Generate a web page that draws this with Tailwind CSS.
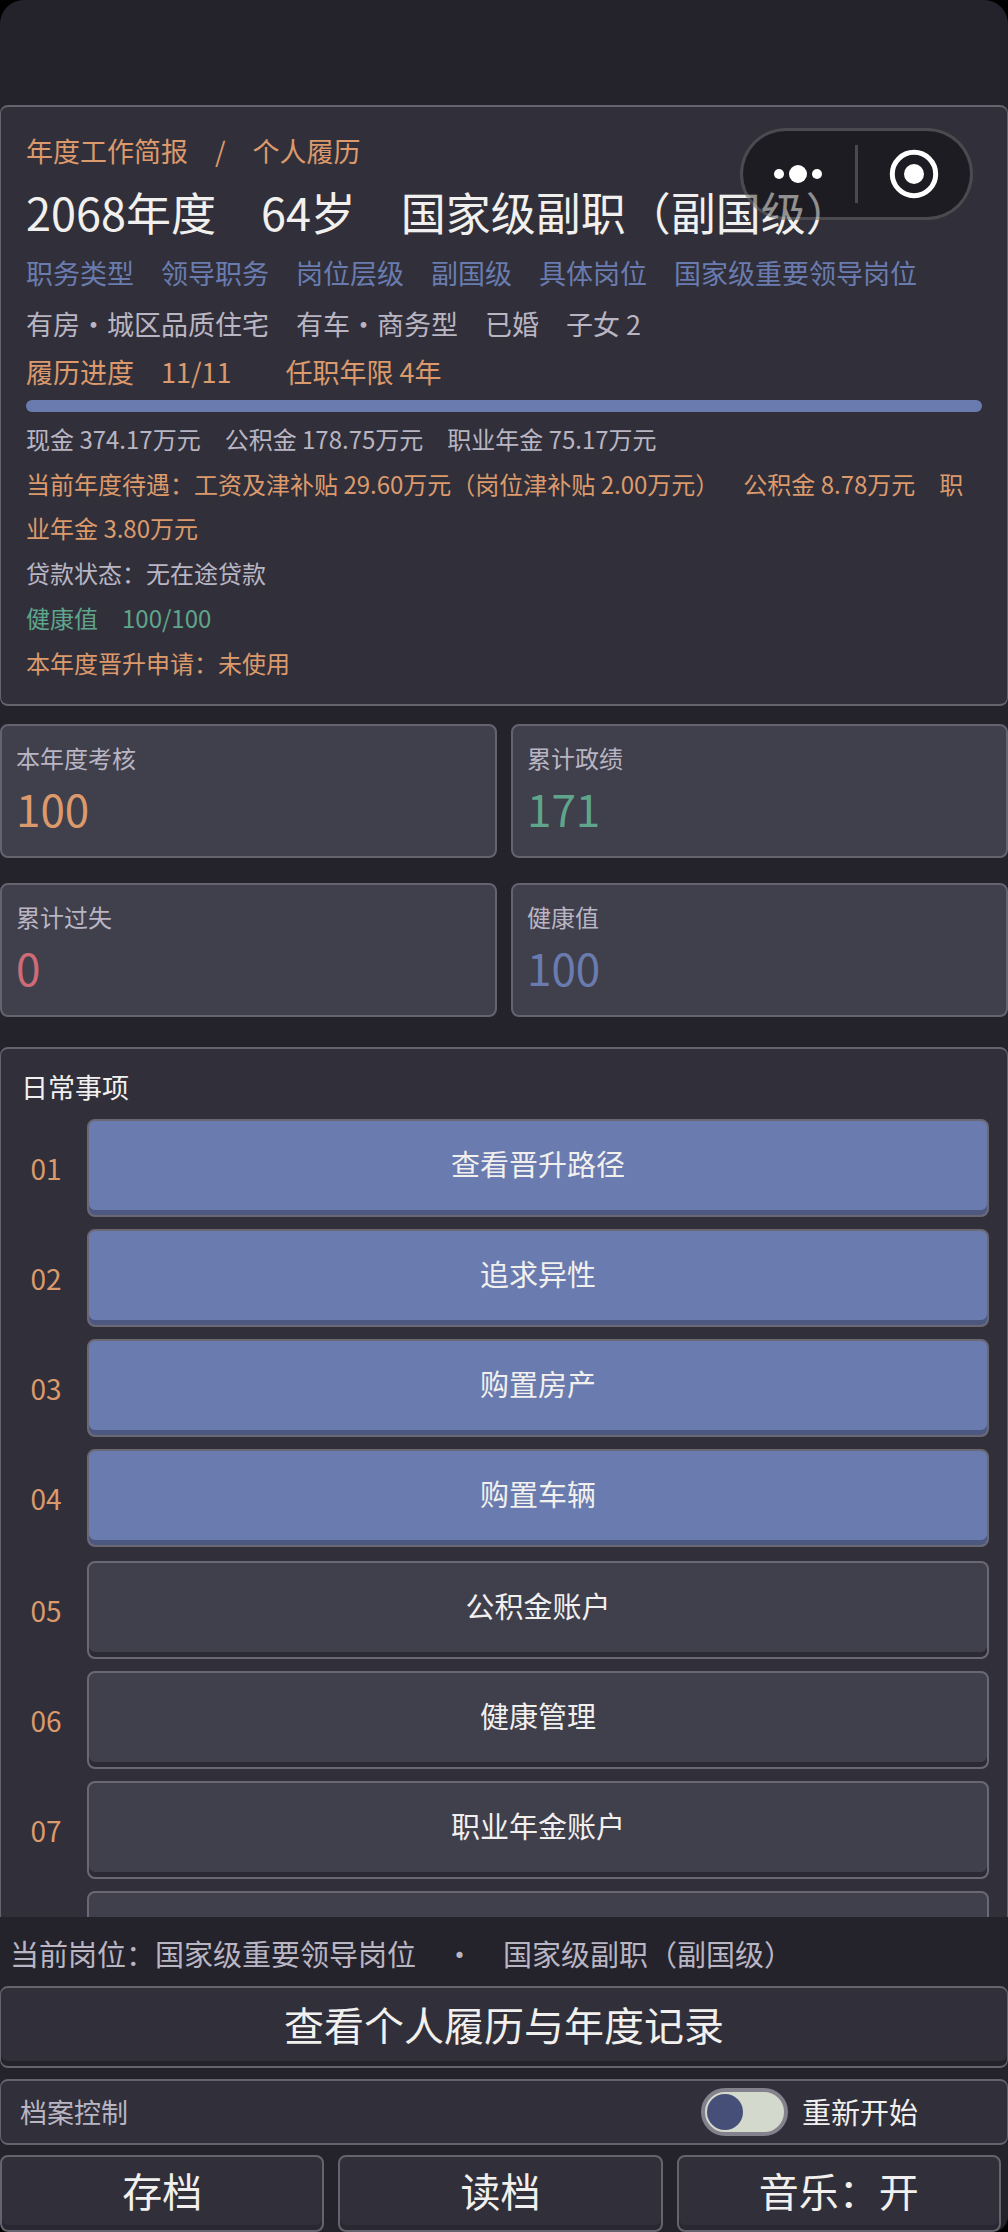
<!DOCTYPE html>
<html lang="zh-CN">
<head>
    <meta charset="UTF-8">
    <meta name="viewport" content="width=device-width, initial-scale=1.0">
    <title>年度工作简报</title>
    <script src="https://cdn.jsdelivr.net/npm/@tailwindcss/browser@4"></script>
</head>
<body class="bg-black font-['Noto_Sans_CJK_SC',sans-serif] [text-spacing-trim:space-all]">
    <div class="relative h-screen flex flex-col overflow-hidden rounded-t-3xl rounded-bl-lg rounded-br-2xl bg-[#24232c] text-[#f2f0ee]">

        <!-- mini program capsule -->
        <div class="absolute top-32 right-[35px] z-10 flex items-center w-[233px] h-[92px] rounded-full border-3 border-white/20 bg-black/40">
            <button type="button" aria-label="更多" class="flex-1 flex justify-center">
                <svg class="w-[50px] h-5" viewBox="0 0 50 20" fill="#fff">
                    <circle cx="5" cy="10" r="5"/>
                    <circle cx="24" cy="10" r="9"/>
                    <circle cx="43" cy="10" r="5"/>
                </svg>
            </button>
            <span class="w-[3px] h-[58px] bg-white/20"></span>
            <button type="button" aria-label="关闭" class="flex-1 flex justify-center">
                <svg class="size-[50px]" viewBox="0 0 50 50" fill="none">
                    <circle cx="25" cy="25" r="21.7" stroke="#fff" stroke-width="5"/>
                    <circle cx="25" cy="25" r="10" fill="#fff"/>
                </svg>
            </button>
        </div>

        <main class="flex-1 min-h-0 overflow-hidden pt-[105px]">
            <section class="rounded-lg border-x border-y-2 border-[#64636e] bg-[#31303a] px-[25px] pt-[22px] pb-[19px]">
                <p class="text-[27px] leading-[44px] text-[#dc9a6c]">年度工作简报　/　个人履历</p>
                <h1 class="text-[45px] leading-[78px]">2068年度　64岁　国家级副职（副国级）</h1>
                <p class="text-[27px] leading-[44px] text-[#6a7caf]">职务类型　领导职务　岗位层级　副国级　具体岗位　国家级重要领导岗位</p>
                <p class="mt-[5px] text-[27px] leading-[48px] text-[#b9b5c3]">有房・城区品质住宅　有车・商务型　已婚　子女 2</p>
                <p class="text-[27px] leading-[48px] text-[#dc9a6c]">履历进度　11/11　　任职年限 4年</p>
                <div class="mt-1 mb-[5px] h-3 rounded-full bg-[#6a7caf]"></div>
                <div class="flex flex-col gap-px text-[24px] leading-[44px]">
                    <p class="text-[#b9b5c3]">现金 374.17万元　公积金 178.75万元　职业年金 75.17万元</p>
                    <p class="text-[#dc9a6c]">当前年度待遇：工资及津补贴 29.60万元（岗位津补贴 2.00万元）　公积金 8.78万元　职业年金 3.80万元</p>
                    <p class="text-[#b9b5c3]">贷款状态：无在途贷款</p>
                    <p class="text-[#5fa58b]">健康值　100/100</p>
                    <p class="text-[#dc9a6c]">本年度晋升申请：未使用</p>
                </div>
            </section>

            <section class="mt-[18px] grid grid-cols-2 gap-x-[14px] gap-y-[25px]">
                <div class="rounded-lg border-2 border-[#64636e] bg-[#403f4c] px-[14px] pt-[11px] pb-[19px]">
                    <p class="text-[24px] leading-[42px] text-[#b9b5c3]">本年度考核</p>
                    <p class="text-[44px] leading-[58px] text-[#dc9a6c]">100</p>
                </div>
                <div class="rounded-lg border-2 border-[#64636e] bg-[#403f4c] px-[14px] pt-[11px] pb-[19px]">
                    <p class="text-[24px] leading-[42px] text-[#b9b5c3]">累计政绩</p>
                    <p class="text-[44px] leading-[58px] text-[#5fa58b]">171</p>
                </div>
                <div class="rounded-lg border-2 border-[#64636e] bg-[#403f4c] px-[14px] pt-[11px] pb-[19px]">
                    <p class="text-[24px] leading-[42px] text-[#b9b5c3]">累计过失</p>
                    <p class="text-[44px] leading-[58px] text-[#cf6b76]">0</p>
                </div>
                <div class="rounded-lg border-2 border-[#64636e] bg-[#403f4c] px-[14px] pt-[11px] pb-[19px]">
                    <p class="text-[24px] leading-[42px] text-[#b9b5c3]">健康值</p>
                    <p class="text-[44px] leading-[58px] text-[#6a7caf]">100</p>
                </div>
            </section>

            <section class="mt-[30px] rounded-lg border-x border-y-2 border-[#64636e] bg-[#31303a] pl-5 pr-[18px] pt-[18px] pb-5">
                <h2 class="mb-3 text-[27px] leading-[40px]">日常事项</h2>
                <ol id="mainActions" class="flex flex-col gap-3"></ol>
                <ol id="otherActions" class="mt-[14px] flex flex-col gap-3"></ol>
                <!-- empty slot after the last action -->
                <div class="mt-3 ml-[66px] h-[98px] rounded-lg border-2 border-[#6a6874] bg-[#403f4c]"></div>
            </section>
        </main>

        <footer>
            <p class="px-[10px] pt-[14px] pb-[11px] text-[29px] leading-[44px] text-[#b9b5c3]">当前岗位：国家级重要领导岗位　・　国家级副职（副国级）</p>
            <button type="button" class="block w-full h-[82px] pb-[7px] rounded-lg border-x border-y-2 border-[#64636e] bg-[#31303a] text-[40px] leading-[60px] shadow-[inset_0_-5px_0_#24232c]">查看个人履历与年度记录</button>
            <div class="mt-[11px] h-[66px] flex items-center rounded-lg border-x border-y-2 border-[#64636e] bg-[#31303a] pl-[19px] pr-[89px]">
                <span class="flex-1 text-[27px] text-[#b9b5c3]">档案控制</span>
                <label class="flex items-center gap-[14px] text-[29px]">
                    <input type="checkbox" role="switch" class="appearance-none w-[87px] h-12 rounded-full border-4 border-[#83828c] bg-[#d3d9cc] p-[2px] before:block before:size-9 before:rounded-full before:bg-[#464f78] checked:before:ml-auto">
                    重新开始
                </label>
            </div>
            <div class="mt-[10px] mr-[7px] grid grid-cols-3 gap-[14px] text-[40px] leading-[60px]">
                <button type="button" class="h-[77px] pb-[7px] rounded-lg border-2 border-[#64636e] bg-[#31303a] shadow-[inset_0_-5px_0_#292832]">存档</button>
                <button type="button" class="h-[77px] pb-[7px] rounded-lg border-2 border-[#64636e] bg-[#31303a] shadow-[inset_0_-5px_0_#292832]">读档</button>
                <button type="button" id="music" class="h-[77px] pb-[7px] rounded-lg border-2 border-[#64636e] bg-[#31303a] shadow-[inset_0_-5px_0_#292832]">音乐：开</button>
            </div>
        </footer>
    </div>

    <script>
        const mainActions = ["查看晋升路径", "追求异性", "购置房产", "购置车辆"];
        const otherActions = ["公积金账户", "健康管理", "职业年金账户"];

        const mainStyle = "bg-[#6a7caf] shadow-[inset_0_-5px_0_#4d5881]";
        const otherStyle = "bg-[#403f4c] shadow-[inset_0_-5px_0_#2c2a35]";

        function renderActions(id, actions, start, style) {
            document.getElementById(id).innerHTML = actions.map((name, i) => `
                <li class="flex items-center gap-4">
                    <span class="w-[50px] text-center text-[28px] text-[#dc9a6c]">${String(start + i).padStart(2, "0")}</span>
                    <button type="button" class="flex-1 h-[98px] pb-2 rounded-lg border-2 border-[#6a6874] text-[29px] ${style}">${name}</button>
                </li>
            `).join("");
        }

        renderActions("mainActions", mainActions, 1, mainStyle);
        renderActions("otherActions", otherActions, mainActions.length + 1, otherStyle);

        const music = document.getElementById("music");
        music.addEventListener("click", () => {
            music.textContent = music.textContent === "音乐：开" ? "音乐：关" : "音乐：开";
        });
    </script>
</body>
</html>
